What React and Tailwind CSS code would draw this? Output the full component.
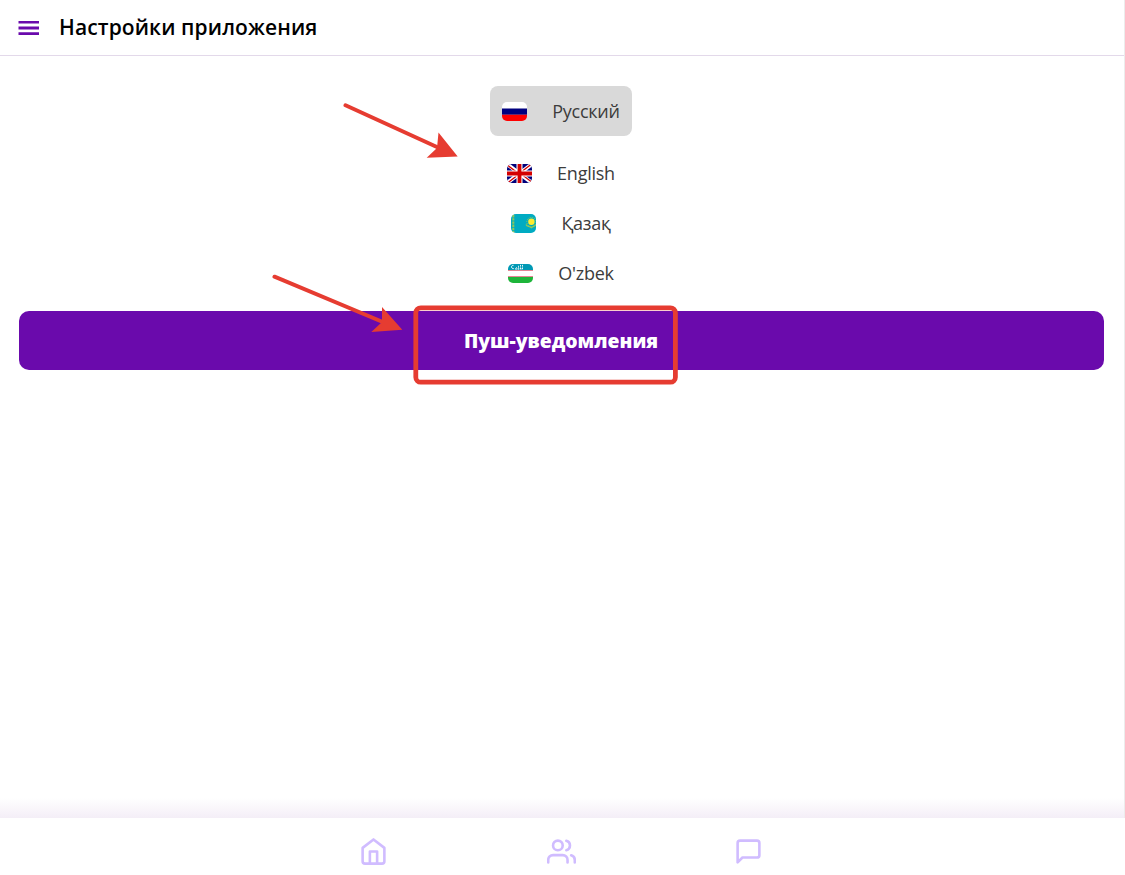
import React, { useState } from "react";

const FlagRu = () => (
  <svg viewBox="0 0 25 19" className="w-[25px] h-[19px] rounded-[5px]">
    <path fill="#fff" d="M0 0h25v7H0z" />
    <path fill="#00007f" d="M0 6.4h25v6.4H0z" />
    <path fill="#f00" d="M0 12.8h25V19H0z" />
  </svg>
);

const FlagGb = () => (
  <svg viewBox="0 0 25 19" className="w-[25px] h-[19px] rounded-[5px]">
    <path fill="#00007a" d="M0 0h25v19H0z" />
    <path stroke="#fff" strokeWidth="3.8" d="M0 0l25 19M25 0L0 19" />
    <path stroke="#d40000" strokeWidth="1.3" d="M0 .8l12.5 9.5M25 18.2L12.5 8.7M25 -.3L12.5 9.2M0 19.3l12.5-9.5" />
    <path stroke="#fff" strokeWidth="6" d="M12.5 0v19M0 9.5h25" />
    <path stroke="#d40000" strokeWidth="3.8" d="M12.5 0v19M0 9.5h25" />
  </svg>
);

const FlagKz = () => (
  <svg viewBox="0 0 25 19" className="w-[25px] h-[19px] rounded-[5px]">
    <path fill="#00abc2" d="M0 0h25v19H0z" />
    <path stroke="#b5cf3c" strokeWidth="2" strokeDasharray="2.4 .8" opacity=".8" d="M2.3 1v18" />
    <circle cx="20.4" cy="8" r="4.6" fill="none" stroke="#b5cf3c" strokeWidth="1" strokeDasharray="1 1" opacity=".8" />
    <circle cx="20.4" cy="7.7" r="3.2" fill="#ffec2d" />
    <path fill="none" stroke="#b5cf3c" strokeWidth="1.2" opacity=".85" d="M15 10.5c1 2.5 3.2 1.4 5.4 3.2 2-1.8 3.6-1 4.4-3" />
  </svg>
);

const FlagUz = () => (
  <svg viewBox="0 0 25 19" className="w-[25px] h-[19px] rounded-[5px]">
    <path fill="#fff" d="M0 0h25v19H0z" />
    <path fill="#0099b5" d="M0 0h25v6H0z" />
    <path fill="#e58593" d="M0 6h25v1H0zM0 12h25v1H0z" />
    <path fill="#1eb53a" d="M0 13h25v6H0z" />
    <path fill="none" stroke="#fff" strokeWidth="1" d="M5.5 1.3C3 1 2.7 4.8 5.7 4.6" />
    <path stroke="#fff" strokeWidth="1" strokeDasharray="1 .6" d="M8.5 3.4v2M10.5 1.8v3.6M12.5 .9v4.5M14.5 .9v4.5M7 4.9h8" />
  </svg>
);

const languages = [
  { id: "ru", label: "Русский", Flag: FlagRu },
  { id: "en", label: "English", Flag: FlagGb },
  { id: "kz", label: "Қазақ", Flag: FlagKz },
  { id: "uz", label: "O'zbek", Flag: FlagUz },
];

const NavIcon = ({ children }) => (
  <button className="flex">
    <svg
      viewBox="0 0 24 24"
      className="w-[29px] h-[29px]"
      fill="none"
      stroke="#d0bcff"
      strokeWidth="2.15"
      strokeLinecap="round"
      strokeLinejoin="round"
    >
      {children}
    </svg>
  </button>
);

const App = () => {
  const [language, setLanguage] = useState("ru");

  return (
    <div className="relative h-[875px] w-[1125px] flex flex-col overflow-hidden bg-white font-['Open_Sans',sans-serif]">
      <div className="flex-1 flex flex-col border-r border-[#ececec]">
        {/* Header */}
        <header className="h-14 pl-[18px] flex items-center gap-5 border-b border-[#e3d9ea]">
          <svg viewBox="0 0 21 14" className="w-[21px] h-[14px]" fill="#6a0aac">
            <path d="M.5 0H21v2.6H.5zM.5 5.6H21v2.8H.5zM.5 11.2H21v2.8H.5z" />
          </svg>
          <h1 className="text-[21px] tracking-[0.12px] font-semibold text-black whitespace-nowrap">
            Настройки приложения
          </h1>
        </header>

        {/* Settings */}
        <main className="flex-1 pt-[30px] pl-[19px] pr-5 flex flex-col items-center bg-white">
          {languages.map(({ id, label, Flag }) => (
            <button
              key={id}
              onClick={() => setLanguage(id)}
              className={`h-[50px] pl-3 pr-3 mr-px flex items-center gap-[25px] rounded-lg text-lg tracking-[-0.25px] text-[#3c3c3c] ${
                language === id ? "bg-[#d9d9d9] mb-3" : ""
              }`}
            >
              <Flag />
              <span>{label}</span>
            </button>
          ))}
          <button className="mt-[13px] pr-px h-[59px] w-full rounded-[10px] bg-[#6a0aac] text-[19.4px] font-extrabold text-white">
            Пуш-уведомления
          </button>
        </main>
        <div className="h-5 bg-gradient-to-b from-white to-[#f4eef7]"></div>
      </div>

      {/* Bottom navigation */}
      <nav className="h-[57px] pt-[19px] pl-[359.4px] flex items-start gap-[158.5px] bg-white">
        <NavIcon>
          <path d="M3 9l9-7 9 7v11a2 2 0 0 1-2 2H5a2 2 0 0 1-2-2z" />
          <path d="M9 22V12h6v10" />
        </NavIcon>
        <NavIcon>
          <path d="M17 21v-2a4 4 0 0 0-4-4H5a4 4 0 0 0-4 4v2" />
          <circle cx="9" cy="7" r="4" />
          <path d="M23 21v-2a4 4 0 0 0-3-3.87M16 3.13a4 4 0 0 1 0 7.75" />
        </NavIcon>
        <NavIcon>
          <path d="M21 15a2 2 0 0 1-2 2H7l-4 4V5a2 2 0 0 1 2-2h14a2 2 0 0 1 2 2z" />
        </NavIcon>
      </nav>

      {/* Hint arrows and frame */}
      <svg
        viewBox="0 0 1125 875"
        className="absolute inset-0 w-full h-full pointer-events-none"
        fill="#e63c31"
        stroke="#e63c31"
        strokeLinecap="round"
      >
        <path strokeWidth="4" d="M345.5 105.3L438 147.5M274.5 276.7L384 322.5" />
        <path stroke="none" d="M438.5 132.5L457.7 156.4L426.7 157.7L437 148z" />
        <path stroke="none" d="M382 307L402.3 329.8L371.3 332L382 322z" />
        <rect x="415.8" y="307.8" width="259.6" height="74.4" rx="5" fill="none" strokeWidth="4.8" />
      </svg>
    </div>
  );
};

export default App;
